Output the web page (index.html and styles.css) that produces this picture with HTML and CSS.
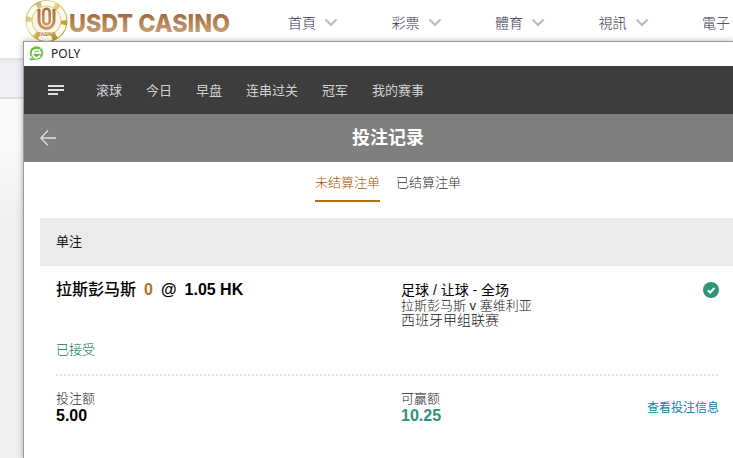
FILE: index.html
```html
<!DOCTYPE html>
<html lang="zh">
<head>
    <meta charset="UTF-8">
    <meta name="viewport" content="width=device-width, initial-scale=1.0">
    <title>USDT CASINO</title>
    <link rel="stylesheet" href="styles.css">
</head>
<body>
    <header class="site-header">
        <div class="logo">
            <svg class="logo-chip" width="43" height="44" viewBox="0 0 43 44">
                <defs>
                    <linearGradient id="gold" x1="0" y1="0" x2="1" y2="1">
                        <stop offset="0" stop-color="#a08a48"/>
                        <stop offset="0.35" stop-color="#efdf9c"/>
                        <stop offset="0.6" stop-color="#cfae3e"/>
                        <stop offset="1" stop-color="#a98a20"/>
                    </linearGradient>
                    <linearGradient id="bronze" x1="0" y1="0" x2="0" y2="1">
                        <stop offset="0" stop-color="#a9713f"/>
                        <stop offset="1" stop-color="#c99665"/>
                    </linearGradient>
                </defs>
                <circle cx="21.500" cy="21" r="21" fill="url(#gold)"/>
                <circle cx="21.500" cy="21" r="17.200" fill="none" stroke="#fffdf4" stroke-width="5.500" stroke-dasharray="13 5" transform="rotate(12 21.500 21)"/>
                <circle cx="21.500" cy="20.500" r="14.500" fill="#fbf7e8" stroke="#d8bf6c" stroke-width="0.8"/>
                <path d="M14 9v12a7.500 7.500 0 0 0 15 0V9" fill="none" stroke="url(#bronze)" stroke-width="3"/>
                <path d="M18.300 21V12a3.200 3.200 0 0 1 6.400 0v9a3.200 3.200 0 0 1-6.400 0" fill="none" stroke="url(#bronze)" stroke-width="2.500"/>
                <text x="21.500" y="36" text-anchor="middle" class="chip-text">CASINO</text>
            </svg>
            <svg class="logo-name" width="175" height="44" viewBox="0 0 175 44">
                <defs>
                    <linearGradient id="brown" x1="0" y1="0" x2="0" y2="1">
                        <stop offset="0.15" stop-color="#9c663a"/>
                        <stop offset="0.85" stop-color="#cb9f74"/>
                    </linearGradient>
                </defs>
                <text x="1" y="31.500" textLength="161" lengthAdjust="spacingAndGlyphs" class="name-text">USDT CASINO</text>
            </svg>
        </div>
        <nav class="site-nav">
            <a class="site-link">首頁 <svg width="14" height="9" viewBox="0 0 14 9"><path d="M1.500 1.500 7 7l5.500-5.500"/></svg></a>
            <a class="site-link">彩票 <svg width="14" height="9" viewBox="0 0 14 9"><path d="M1.500 1.500 7 7l5.500-5.500"/></svg></a>
            <a class="site-link">體育 <svg width="14" height="9" viewBox="0 0 14 9"><path d="M1.500 1.500 7 7l5.500-5.500"/></svg></a>
            <a class="site-link">視訊 <svg width="14" height="9" viewBox="0 0 14 9"><path d="M1.500 1.500 7 7l5.500-5.500"/></svg></a>
            <a class="site-link last">電子</a>
        </nav>
    </header>
    <div class="site-band"></div>

    <div class="window">
        <div class="title-bar">
            <svg width="15" height="16" viewBox="0 0 15 16">
                <circle cx="7.500" cy="8" r="6.700" fill="#5fc03a"/>
                <path d="M11.200 10.400A4 4 0 1 1 11.500 8H4" fill="none" stroke="#fff" stroke-width="2"/>
                <path d="M1 13.800C3 10 9 3.500 14 3" fill="none" stroke="#c2ecae" stroke-width="1"/>
                <path d="M1 13.800c1.200 1 3 .8 4.500 0" fill="none" stroke="#3fa12c" stroke-width="1.200"/>
            </svg>
            <span>POLY</span>
        </div>

        <nav class="main-nav">
            <svg class="menu-icon" width="16" height="10" viewBox="0 0 16 10">
                <path d="M0 1h16M0 5h16M0 9h10"/>
            </svg>
            <a>滚球</a>
            <a>今日</a>
            <a>早盘</a>
            <a>连串过关</a>
            <a>冠军</a>
            <a>我的赛事</a>
        </nav>

        <div class="page-title">
            <svg class="back-icon" width="16" height="16" viewBox="0 0 16 16">
                <path d="M8 .5.8 8 8 15.500M.8 8H16"/>
            </svg>
            <h1>投注记录</h1>
        </div>

        <div class="tabs">
            <a class="tab active">未结算注单</a>
            <a class="tab">已结算注单</a>
        </div>

        <div class="bet">
            <div class="bet-type">单注</div>
            <div class="bet-body">
                <div class="bet-row bet-info">
                    <div class="selection">
                        <span>拉斯彭马斯</span>
                        <span class="handicap">0</span>
                        <span class="at">@</span>
                        <span>1.05 HK</span>
                    </div>
                    <div class="match">
                        <div class="market">足球 / 让球 - 全场</div>
                        <div class="teams">拉斯彭马斯 v 塞维利亚</div>
                        <div class="league">西班牙甲组联赛</div>
                    </div>
                    <svg class="check-icon" width="16" height="16" viewBox="0 0 16 16">
                        <circle cx="8" cy="8" r="8" fill="#2f9478"/>
                        <path d="M4.800 8.200 7.200 10.500 11.400 6" fill="none" stroke="#fff" stroke-width="2"/>
                    </svg>
                </div>
                <div class="status">已接受</div>
                <svg class="divider" width="664" height="2"><path d="M0 1H664"/></svg>
                <div class="bet-row bet-amounts">
                    <div>
                        <div class="label">投注额</div>
                        <div class="amount">5.00</div>
                    </div>
                    <div>
                        <div class="label">可赢额</div>
                        <div class="amount win">10.25</div>
                    </div>
                    <a class="details">查看投注信息</a>
                </div>
            </div>
        </div>
    </div>
</body>
</html>
```

FILE: styles.css
```css
/* styles.css */
* {
    box-sizing: border-box;
}

body {
    margin: 0;
    height: 458px;
    overflow: hidden;
    position: relative;
    font-family: "Liberation Sans", "Noto Sans CJK SC", sans-serif;
    font-size: 13px;
    background: linear-gradient(#fafafa 98px, #fafafa 140px, #f0f0f0 220px, #f0f0f0);
}

/* Site behind the window */
.site-header {
    display: flex;
    height: 58px;
    padding-left: 25px;
    background-color: #fff;
}

.logo {
    display: flex;
    width: 263px;
    flex-shrink: 0;
}

.chip-text {
    font-size: 4.5px;
    font-weight: bold;
    fill: #b88f55;
}

.name-text {
    font-family: Inter, "Liberation Sans", sans-serif;
    font-size: 25px;
    font-weight: 800;
    fill: url(#brown);
}

.site-nav {
    display: flex;
    font-family: "Noto Sans CJK TC", sans-serif;
    font-weight: 300;
    font-size: 14px;
    line-height: 42px;
    color: #35314d;
}

.site-link {
    display: flex;
    align-items: center;
    gap: 8px;
    height: 43px;
    width: 103.5px;
    flex-shrink: 0;
}

.site-link.last {
    width: 31px;
}

.site-link svg {
    margin-top: 2px;
}

.site-link path {
    fill: none;
    stroke: #b9b8d0;
    stroke-width: 2;
}

.site-band {
    height: 41px;
    background: linear-gradient(#dfe1e6, #eef0f5 5px, #f1f2f7);
    border-bottom: 2px solid #dcdde0;
}

/* Popup window */
.window {
    position: absolute;
    left: 23px;
    top: 41px;
    width: 710px;
    height: 417px;
    overflow: hidden;
    background-color: #fff;
    border: 1px solid #9a9a9a;
    border-right: none;
    border-bottom: none;
    box-shadow: 0 0 6px rgba(0, 0, 0, 0.3);
}

.title-bar {
    display: flex;
    align-items: center;
    gap: 7px;
    height: 24px;
    padding: 0 0 2px 5px;
    font-family: "Noto Sans", sans-serif;
    font-size: 12px;
    color: #222;
}

.main-nav {
    display: flex;
    align-items: center;
    gap: 24px;
    height: 48px;
    padding: 0 0 1px 24px;
    background-color: #3d3d3d;
    color: #d2d2d2;
}

.menu-icon {
    margin: 1px 8px 0 0;
}

.menu-icon path {
    stroke: #e0e0e0;
    stroke-width: 2;
}

.page-title {
    display: flex;
    align-items: center;
    width: 728px;
    height: 48px;
    padding: 0 16px;
    background-color: #7f7f7f;
    color: #fff;
}

.back-icon path {
    fill: none;
    stroke: #e0e0e0;
    stroke-width: 1.3;
}

.page-title h1 {
    flex: 1;
    margin: 0 16px 0 0;
    text-align: center;
    font-size: 18px;
    line-height: 48px;
}

.tabs {
    display: flex;
    justify-content: center;
    gap: 16px;
    width: 728px;
    height: 56px;
}

.tab {
    height: 40px;
    line-height: 41px;
    font-weight: 300;
    color: #333;
}

.tab.active {
    color: #a85600;
    border-bottom: 2px solid #ae7214;
}

/* Bet slip */
.bet {
    width: 696px;
    margin: 0 16px;
}

.bet-type {
    height: 48px;
    padding-left: 16px;
    line-height: 48px;
    background-color: #ebebeb;
    color: #111;
}

.bet-body {
    padding: 16px 16px 0;
}

.bet-row {
    display: grid;
    grid-template-columns: 345px 1fr auto;
}

.bet-info {
    height: 60px;
    align-items: start;
}

.selection {
    display: flex;
    gap: 8px;
    font-size: 16px;
    line-height: 16px;
    font-weight: 500;
    color: #000;
}

.selection span + span {
    font-weight: bold;
}

.selection .handicap {
    color: #b3712c;
}

.match {
    line-height: 15px;
    font-weight: 300;
    color: #222;
}

.market {
    font-size: 14px;
    line-height: 16px;
    font-weight: 400;
    color: #000;
}

.league {
    font-size: 14px;
}

.check-icon {
    margin-right: 1px;
}

.status {
    height: 32px;
    line-height: 16px;
    font-weight: 300;
    color: #00704e;
}

.divider {
    display: block;
}

.divider path {
    stroke: #e0e0e0;
    stroke-width: 2;
    stroke-dasharray: 2 2;
}

.bet-amounts {
    padding-top: 15px;
}

.label {
    line-height: 16px;
    font-weight: 300;
    color: #222;
}

.amount {
    font-size: 16px;
    line-height: 18px;
    font-weight: bold;
    color: #000;
}

.amount.win {
    color: #2f9478;
}

.details {
    align-self: center;
    margin: 0 1px 4px 0;
    font-size: 12px;
    color: #0e7fae;
}
```
